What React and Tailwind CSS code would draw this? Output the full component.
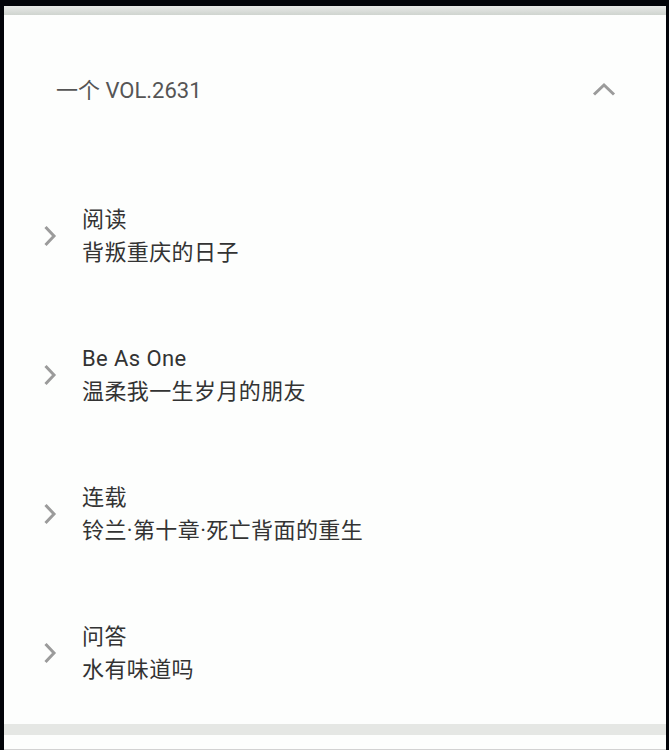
const items = [
  { title: '阅读', sub: '背叛重庆的日子' },
  { title: 'Be As One', sub: '温柔我一生岁月的朋友' },
  { title: '连载', sub: '铃兰·第十章·死亡背面的重生' },
  { title: '问答', sub: '水有味道吗' },
]

function ChevronRight() {
  return (
    <svg width="14" height="22" viewBox="0 0 14 22" className="shrink-0">
      <path d="M2.5 2 L11 11 L2.5 20" fill="none" stroke="#9b9b9b" strokeWidth="3" />
    </svg>
  )
}

function ChevronUp() {
  return (
    <svg width="24" height="14" viewBox="0 0 24 14" className="-mt-[4px]">
      <path d="M2 12.5 L12 3 L22 12.5" fill="none" stroke="#9b9b9b" strokeWidth="3" />
    </svg>
  )
}

export default function App() {
  return (
    <div
      className="h-[750px] w-[669px] bg-[#020409] pt-[6px] pl-[4px] pr-[3px] flex flex-col"
      style={{ fontFamily: 'Roboto, "Noto Sans CJK SC", sans-serif' }}
    >
      <div className="flex-1 flex flex-col bg-[#fdfefd]">
        <div className="h-[9px] bg-gradient-to-b from-[#e8eae8] to-[#cfd4cf]" />
        <div className="h-[151px] flex items-center justify-between pl-[52px] pr-[50px]">
          <span className="text-[22px] leading-[33px] text-[#555555]">一个 VOL.2631</span>
          <ChevronUp />
        </div>
        {items.map((it) => (
          <div key={it.sub} className="h-[139px] flex items-center pl-[39px]">
            <ChevronRight />
            <div className="ml-[25px] flex flex-col text-[22px] leading-[33px] tracking-[0.4px] text-[#333333]">
              <span>{it.title}</span>
              <span>{it.sub}</span>
            </div>
          </div>
        ))}
        <div className="mt-[2px] h-[11px] bg-[#e5e7e4]" />
        <div className="flex-1 bg-[#fdfefd]" />
        <div className="h-[1px] bg-[#d2d2d2]" />
      </div>
    </div>
  )
}
